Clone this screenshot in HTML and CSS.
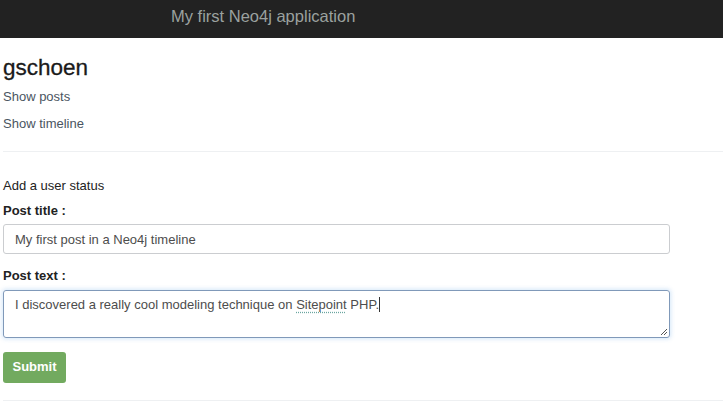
FILE: index.html
```html
<!DOCTYPE html>
<html lang="en">
<head>
<meta charset="utf-8">
<title>My first Neo4j application</title>
<link rel="stylesheet" href="styles.css">
</head>
<body>
<nav class="navbar">
  <span class="brand">My first Neo4j application</span>
</nav>
<main class="container">
  <h3 class="username">gschoen</h3>
  <ul class="links">
    <li><a href="#">Show posts</a></li>
    <li><a href="#">Show timeline</a></li>
  </ul>
  <hr class="rule rule-top">
  <form class="status-form">
    <p class="form-title">Add a user status</p>
    <label class="label" for="title">Post title :</label>
    <input class="input" id="title" type="text" value="My first post in a Neo4j timeline">
    <label class="label label-text">Post text :</label>
    <div class="textarea" contenteditable="true">I discovered a really cool modeling technique on <span class="spell">Sitepoint</span> PHP.<span class="caret"></span>
      <svg class="grip" width="8" height="8" viewBox="0 0 8 8"><path d="M7 1 L1 7 M7 4 L4 7" stroke="#555" stroke-width="1" fill="none"/></svg>
    </div>
    <button class="btn" type="button">Submit</button>
  </form>
  <hr class="rule rule-bottom">
</main>
</body>
</html>
```
FILE: styles.css
```css
html, body {
  margin: 0;
  padding: 0;
  background: #fff;
}
body {
  font-family: "Liberation Sans", Arial, sans-serif;
  font-size: 13px;
  color: #222;
}
.navbar {
  height: 38px;
  background: #222;
  padding-left: 171px;
  box-sizing: border-box;
}
.brand {
  display: block;
  font-size: 16.5px;
  line-height: 32px;
  color: #9ba19f;
}
.container {
  padding: 0 3px;
}
.username {
  margin: 17px 0 3px;
  font-size: 22.5px;
  line-height: 26px;
  font-weight: normal;
  color: #1a1a1a;
  -webkit-text-stroke: 0.3px #1a1a1a;
}
.links {
  list-style: none;
  margin: 0;
  padding: 0;
}
.links li {
  line-height: 26.5px;
}
.links a {
  color: #4a5561;
  text-decoration: none;
}
.rule {
  border: 0;
  border-top: 1px solid #eef0f2;
  margin: 0;
  width: 720px;
}
.rule-top {
  margin-top: 14px;
}
.status-form {
  width: 667px;
}
.form-title {
  margin: 24px 0 5px;
  line-height: 20px;
}
.label {
  display: block;
  font-weight: bold;
  line-height: 20px;
  margin-bottom: 3px;
}
.label-text {
  margin-top: 12px;
  margin-bottom: 4px;
}
.input {
  display: block;
  box-sizing: border-box;
  width: 667px;
  height: 30px;
  margin: 0;
  padding: 0 11px;
  border: 1px solid #cbcdd0;
  border-radius: 3px;
  font-family: inherit;
  font-size: 13px;
  color: #4d4d4d;
  background: #fff;
  outline: none;
}
.textarea {
  position: relative;
  box-sizing: border-box;
  width: 667px;
  height: 48px;
  padding: 4px 11px;
  border: 1px solid #8099b9;
  border-radius: 3px;
  line-height: 19px;
  color: #4d4d4d;
  box-shadow: 0 0 4px 1px rgba(160, 200, 240, 0.45);
  outline: none;
}
.spell {
  text-decoration: underline dotted #6aa6a0;
  text-underline-offset: 3px;
}
.caret {
  display: inline-block;
  width: 1px;
  height: 15px;
  background: #333;
  vertical-align: -3px;
}
.grip {
  position: absolute;
  right: 1px;
  bottom: 1px;
}
.btn {
  display: block;
  margin-top: 14px;
  width: 63px;
  height: 31px;
  padding: 0 0 2px;
  border: 0;
  border-radius: 3px;
  background: #72aa5f;
  color: #fff;
  font-family: inherit;
  font-size: 13px;
  font-weight: bold;
}
.rule-bottom {
  margin-top: 17px;
}
```
